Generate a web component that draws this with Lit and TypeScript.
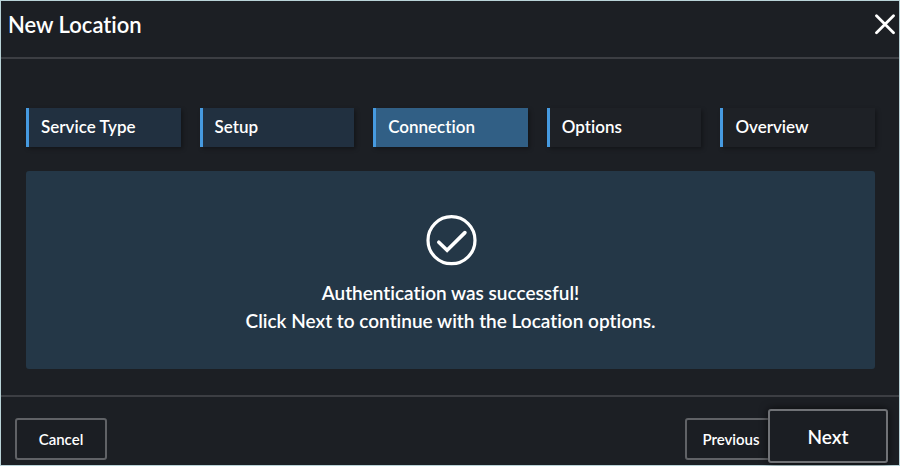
import { LitElement, html, css } from "lit";
import { customElement, state } from "lit/decorators.js";
import { classMap } from "lit/directives/class-map.js";

const STEPS = ["Service Type", "Setup", "Connection", "Options", "Overview"];

@customElement("app-root")
export class AppRoot extends LitElement {
  @state() private current = 2;

  static styles = css`
    :host {
      display: block;
      font-family: Lato, sans-serif;
      font-weight: 600;
      font-variant-ligatures: none;
      color: #fff;
    }
    * {
      box-sizing: border-box;
    }
    .dialog {
      display: flex;
      flex-direction: column;
      min-height: 100vh;
      background: #1c1f24;
      border: 1px solid #b9d3d8;
    }
    .header {
      display: flex;
      align-items: center;
      justify-content: space-between;
      padding: 8px 3px 16px 7px;
      border-bottom: 2px solid #3c3e43;
    }
    h1 {
      margin: 0;
      font-size: 22px;
      line-height: 32px;
      font-weight: inherit;
    }
    button {
      font: inherit;
      font-variant-ligatures: none;
      color: inherit;
      margin: 0;
      padding: 0;
      cursor: pointer;
    }
    .close {
      display: flex;
      background: none;
      border: none;
    }
    .body {
      flex: 1;
      display: flex;
      flex-direction: column;
      gap: 24px;
      padding: 49px 24px 26px 25px;
    }
    .steps {
      display: grid;
      grid-template-columns: repeat(5, 1fr);
      gap: 19px;
    }
    .step {
      height: 39px;
      padding: 0 0 1px 12px;
      text-align: left;
      font-size: 17px;
      line-height: 24px;
      background: #1e2126;
      border: none;
      border-left: 3px solid #469ae0;
      box-shadow: 2px 2px 4px rgba(0, 0, 0, 0.3);
    }
    .done {
      background: #213040;
    }
    .current {
      background: #315f85;
    }
    .panel {
      flex: 1;
      display: flex;
      flex-direction: column;
      align-items: center;
      gap: 12px;
      padding: 42px 16px 32px;
      background: #243747;
      border-radius: 3px;
      text-align: center;
    }
    .message {
      margin: 0;
      font-size: 19px;
      line-height: 28px;
    }
    .footer {
      position: relative;
      display: flex;
      justify-content: space-between;
      padding: 21px 122px 5px 14px;
      border-top: 2px solid #3c3e43;
    }
    .button {
      width: 92px;
      height: 42px;
      font-size: 15px;
      background: #1b1e23;
      border: 2px solid #606266;
      border-radius: 3px;
    }
    .next {
      position: absolute;
      right: 11px;
      bottom: 2px;
      width: 120px;
      height: 54px;
      font-size: 19px;
      border-color: #707276;
      box-shadow: 0 0 8px rgba(0, 0, 0, 0.7);
    }
  `;

  private go(step: number) {
    this.current = Math.max(0, Math.min(STEPS.length - 1, step));
  }

  render() {
    return html`
      <section class="dialog" role="dialog" aria-labelledby="title">
        <header class="header">
          <h1 id="title">New Location</h1>
          <button class="close" aria-label="Close">
            <svg width="22" height="22" viewBox="0 0 22 22" fill="none" stroke="#fff" stroke-width="2.8" stroke-linecap="round">
              <path d="M2.5 1.8l17 17M19.5 1.8l-17 17" />
            </svg>
          </button>
        </header>
        <main class="body">
          <nav class="steps" aria-label="Steps">
            ${STEPS.map(
              (name, i) => html`<button
                class=${classMap({ step: true, done: i < this.current, current: i === this.current })}
                aria-current=${i === this.current ? "step" : "false"}
                @click=${() => this.go(i)}
              >${name}</button>`
            )}
          </nav>
          <div class="panel" role="status">
            <svg width="54" height="54" viewBox="0 0 54 54" fill="none" stroke="#fff" stroke-linecap="round" aria-hidden="true">
              <circle cx="27.5" cy="27.2" r="23.5" stroke-width="3.2" />
              <path d="M14.8 29.2l8.3 8 17.8-17.6" stroke-width="3.6" />
            </svg>
            <p class="message">
              Authentication was successful!<br />Click Next to continue with the Location options.
            </p>
          </div>
        </main>
        <footer class="footer">
          <button class="button">Cancel</button>
          <button class="button" @click=${() => this.go(this.current - 1)}>Previous</button>
          <button class="button next" @click=${() => this.go(this.current + 1)}>Next</button>
        </footer>
      </section>
    `;
  }
}
